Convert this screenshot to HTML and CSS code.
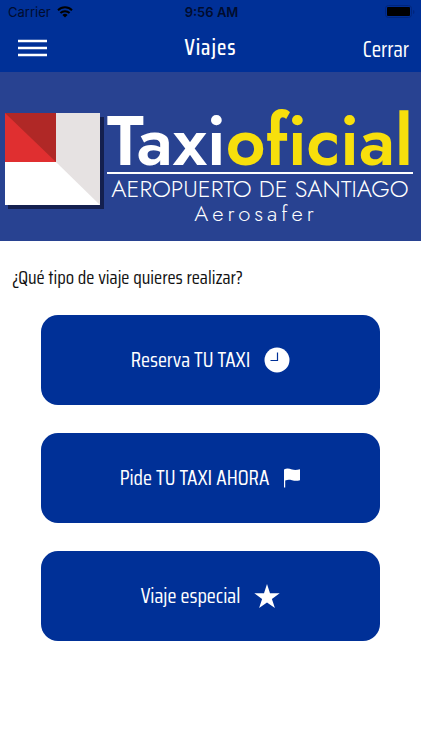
FILE: index.html
```html
<!DOCTYPE html>
<html lang="es">
<head>
<meta charset="utf-8">
<meta name="viewport" content="width=device-width, initial-scale=1">
<title>Viajes</title>
<link rel="stylesheet" href="styles.css">
</head>
<body>
<div class="app">
  <header class="header">
    <div class="status">
      <span class="carrier">Carrier
        <svg class="wifi" viewBox="0 0 16 12" aria-hidden="true"><path d="M1 4.2a10 10 0 0 1 14 0M3.4 7a6.6 6.6 0 0 1 9.2 0" fill="none" stroke="currentColor" stroke-width="2"/><path d="M8 11.6 5.4 9a3.7 3.7 0 0 1 5.2 0z" fill="currentColor"/></svg>
      </span>
      <span class="time">9:56 AM</span>
      <svg class="battery" viewBox="0 0 30 14" aria-hidden="true"><rect x="0.5" y="0.5" width="26" height="12" rx="3" fill="none" stroke="#00257c"/><rect x="2" y="2" width="23" height="9" rx="1" fill="#000"/><path d="M28 5v4q1.500-.5 1.500-2T28 5z" fill="#00257c"/></svg>
    </div>
    <nav class="nav">
      <button class="menu" type="button" aria-label="Menú"><svg viewBox="0 0 30 18" aria-hidden="true"><path d="M0 2h29M0 9h29M0 16h29" stroke="#fff" stroke-width="2.400"/></svg></button>
      <h1 class="title">Viajes</h1>
      <a class="close" href="#">Cerrar</a>
    </nav>
  </header>
  <section class="banner">
    <svg class="mark" viewBox="0 0 100 97" aria-hidden="true">
      <path d="M3 4h96v92H3z" fill="#14204f"/>
      <path d="M0 0h95v92H0z" fill="#fff"/>
      <path d="M51 0h44v92L51 49z" fill="#e6e2e2"/>
      <path d="M0 0h51v49H0z" fill="#e02f30"/>
      <path d="M0 0h51v49z" fill="#b02826"/>
    </svg>
    <div class="brand">
      <p class="name">Taxi<span class="accent">oficial</span></p>
      <p class="airport">AEROPUERTO DE SANTIAGO</p>
      <p class="company">Aerosafer</p>
    </div>
  </section>
  <main class="main">
    <h2 class="question">¿Qué tipo de viaje quieres realizar?</h2>
    <div class="options">
      <button class="option" type="button">Reserva TU TAXI
        <svg class="icon" viewBox="0 0 26 26" aria-hidden="true"><circle cx="13" cy="13" r="12.500" fill="#fff"/><path d="M13.500 5.500v8h-7" fill="none" stroke="#003097" stroke-width="1.200"/></svg>
      </button>
      <button class="option" type="button">Pide TU TAXI AHORA
        <svg class="icon flag" viewBox="0 0 18 20" aria-hidden="true"><path d="M1 1.500c3-1.500 5-.8 8 0 2.500.6 5 .5 8-.3v11c-3 .8-5.500.6-8 0-2.500-.5-4.500-.5-6.800.2V19.500H1z" fill="#fff"/></svg>
      </button>
      <button class="option" type="button">Viaje especial
        <svg class="icon" viewBox="0 0 26 26" aria-hidden="true"><path d="M13 1l3 9.200h9.700l-7.800 5.700 3 9.200L13 19.400l-7.900 5.700 3-9.200L.3 10.200H10z" fill="#fff"/></svg>
      </button>
    </div>
  </main>
</div>
</body>
</html>
```

FILE: styles.css
```css
* { box-sizing: border-box; }

body {
  margin: 0;
  background: #fff;
  color: #111;
  font-family: "Saira Condensed", "Roboto Condensed", "Open Sans Condensed", "Noto Sans CJK SC", sans-serif;
}

.app { margin-right: 1px; }

h1, h2, p { margin: 0; font-weight: 400; }

button {
  border: 0;
  font: inherit;
  color: inherit;
  cursor: pointer;
}

.header { background: #003097; color: #fff; }

.status {
  display: grid;
  grid-template-columns: 1fr auto 1fr;
  align-items: center;
  height: 24px;
  padding: 0 6px 0 8px;
  color: #000c2e;
  font-family: Inter, sans-serif;
  font-size: 13px;
}

.carrier { display: flex; align-items: center; gap: 6px; }
.wifi { width: 16px; height: 12px; color: #000; }
.time { font-weight: 600; }
.battery { width: 30px; height: 14px; justify-self: end; }

.nav {
  display: grid;
  grid-template-columns: 1fr auto 1fr;
  align-items: center;
  height: 48px;
  padding: 0 12px;
}

.menu { width: 30px; margin-left: 6px; padding: 0; background: none; }
.menu svg { display: block; width: 30px; height: 18px; }
.title { font-size: 22px; font-weight: 500; line-height: 24px; letter-spacing: 1px; }
.close {
  justify-self: end;
  padding-top: 4px;
  color: #fff;
  font-size: 22px;
  line-height: 24px;
  text-decoration: none;
}

.banner {
  display: flex;
  align-items: flex-start;
  gap: 2px;
  padding: 41px 8px 0 5px;
  height: 169px;
  background: #284291;
  color: #fff;
  font-family: Jost, "Josefin Sans", Urbanist, Questrial, Lato, sans-serif;
}

.mark { flex: none; width: 100px; height: 97px; }
.brand { flex: 1; min-width: 0; white-space: nowrap; }
.name {
  height: 61px;
  border-bottom: 2px solid #fff;
  font-size: 69px;
  font-weight: 600;
  line-height: 56px;
  font-variant-ligatures: none;
}
.accent { color: #f7df0c; }
.airport {
  margin-top: 3px;
  font-size: 24px;
  font-weight: 300;
  line-height: 24px;
  text-align: center;
}
.company {
  font-size: 22px;
  font-weight: 300;
  line-height: 24px;
  letter-spacing: 4px;
  padding-right: 8px;
  text-align: center;
}

.main { padding: 24px 12px; }
.question { font-size: 19px; line-height: 24px; }

.options {
  display: flex;
  flex-direction: column;
  gap: 28px;
  margin: 26px 29px 0;
}

.option {
  display: flex;
  align-items: center;
  justify-content: center;
  gap: 14px;
  height: 90px;
  border-radius: 17px;
  background: #003097;
  color: #fff;
  font-size: 21px;
  line-height: 24px;
}

.icon { width: 26px; height: 26px; }
.flag { width: 18px; height: 20px; }
```
